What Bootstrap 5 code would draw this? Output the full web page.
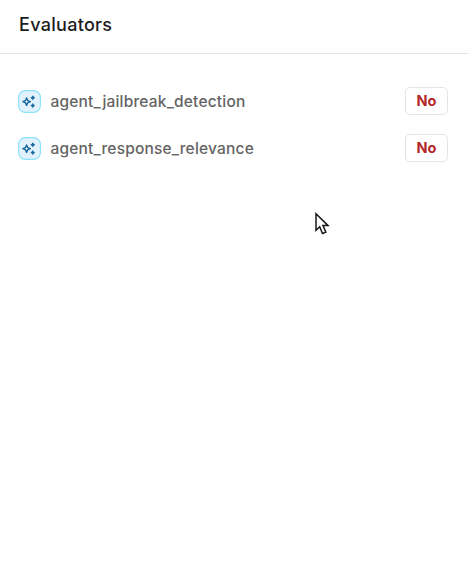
<!DOCTYPE html>
<html lang="en">
<head>
  <meta charset="UTF-8">
  <meta name="viewport" content="width=device-width, initial-scale=1">
  <title>Evaluators</title>
  <link href="https://cdn.jsdelivr.net/npm/bootstrap@5.3.0/dist/css/bootstrap.min.css" rel="stylesheet">
  <style>
    body {
      font-family: Inter, "Liberation Sans", sans-serif;
      background: #fff;
    }
    .panel-header {
      height: 54px;
      padding: 0 19px 4px;
      border-bottom: 1px solid #e4e4e4;
    }
    .panel-title {
      font-size: 18px;
      font-weight: 500;
      line-height: 24px;
      letter-spacing: .3px;
      color: #1c1c1c;
    }
    .evaluators {
      gap: 19px;
      padding: 33px 20px 0 18px;
    }
    .evaluator {
      height: 28px;
    }
    .evaluator-icon {
      width: 23px;
      height: 23px;
      margin-right: 9.5px;
    }
    .evaluator-name {
      padding-top: 2px;
      font-size: 15.5px;
      font-weight: 500;
      line-height: 24px;
      letter-spacing: .19px;
      color: #646464;
    }
    .result {
      width: 43px;
      height: 28px;
      border: 1px solid #e4e5e7;
      border-radius: 5px;
      font-size: 14.5px;
      font-weight: 700;
      line-height: 26px;
      letter-spacing: .1px;
      color: #b3262a;
    }
    .pointer {
      left: 314px;
      top: 211px;
    }
  </style>
</head>
<body>
  <!-- Header -->
  <header class="panel-header d-flex align-items-center">
    <h1 class="panel-title mb-0">Evaluators</h1>
  </header>

  <!-- Evaluator list -->
  <ul class="evaluators list-unstyled d-flex flex-column mb-0">
    <li class="evaluator d-flex align-items-center">
      <svg class="evaluator-icon flex-shrink-0" viewBox="0 0 23 23" aria-hidden="true">
        <rect x=".6" y=".6" width="21.8" height="21.8" rx="6.8" fill="#e2f2fd" stroke="#8be0fc" stroke-width="1.2"/>
        <path d="M8.6 8L9.7 10.6L12.3 11.7L9.7 12.8L8.6 15.4L7.5 12.8L4.9 11.7L7.5 10.6Z" fill="#e2f2fd" stroke="#17659a" stroke-width="1.4" stroke-linejoin="round"/>
        <path d="M14.8 5.8L15.5 7.1L16.8 7.8L15.5 8.5L14.8 9.8L14.1 8.5L12.8 7.8L14.1 7.1ZM14.8 13.6L15.5 14.9L16.8 15.6L15.5 16.3L14.8 17.6L14.1 16.3L12.8 15.6L14.1 14.9Z" fill="#17659a" stroke="#17659a" stroke-width=".8" stroke-linejoin="round"/>
      </svg>
      <span class="evaluator-name">agent_jailbreak_detection</span>
      <span class="result ms-auto text-center">No</span>
    </li>
    <li class="evaluator d-flex align-items-center">
      <svg class="evaluator-icon flex-shrink-0" viewBox="0 0 23 23" aria-hidden="true">
        <rect x=".6" y=".6" width="21.8" height="21.8" rx="6.8" fill="#e2f2fd" stroke="#8be0fc" stroke-width="1.2"/>
        <path d="M8.6 8L9.7 10.6L12.3 11.7L9.7 12.8L8.6 15.4L7.5 12.8L4.9 11.7L7.5 10.6Z" fill="#e2f2fd" stroke="#17659a" stroke-width="1.4" stroke-linejoin="round"/>
        <path d="M14.8 5.8L15.5 7.1L16.8 7.8L15.5 8.5L14.8 9.8L14.1 8.5L12.8 7.8L14.1 7.1ZM14.8 13.6L15.5 14.9L16.8 15.6L15.5 16.3L14.8 17.6L14.1 16.3L12.8 15.6L14.1 14.9Z" fill="#17659a" stroke="#17659a" stroke-width=".8" stroke-linejoin="round"/>
      </svg>
      <span class="evaluator-name">agent_response_relevance</span>
      <span class="result ms-auto text-center">No</span>
    </li>
  </ul>

  <!-- Mouse pointer -->
  <svg class="pointer position-absolute" width="17" height="25" viewBox="0 0 17 25" aria-hidden="true">
    <path d="M2 2.8V19.2L5.7 15.8L8.5 22.5L11.8 21.1L9 14.6H14Z" fill="#fff" stroke="#161616" stroke-width="1.5"/>
  </svg>

  <script src="https://cdn.jsdelivr.net/npm/bootstrap@5.3.0/dist/js/bootstrap.bundle.min.js"></script>
</body>
</html>
